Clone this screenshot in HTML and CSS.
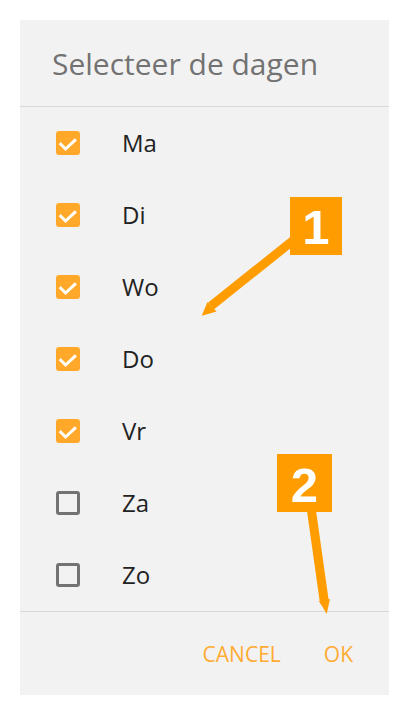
FILE: index.html
```html
<!DOCTYPE html>
<html>
<head>
<meta charset="utf-8">
<link rel="stylesheet" href="styles.css">
</head>
<body>
<div class="dialog">
  <div class="header"><h1 class="title">Selecteer de dagen</h1></div>
  <ul class="list">
    <li class="row"><span class="box checked"><svg viewBox="0 0 24 24"><path d="M4.8 13.2 L9.6 18 L18.8 9.4"/></svg></span><span class="label">Ma</span></li>
    <li class="row"><span class="box checked"><svg viewBox="0 0 24 24"><path d="M4.8 13.2 L9.6 18 L18.8 9.4"/></svg></span><span class="label">Di</span></li>
    <li class="row"><span class="box checked"><svg viewBox="0 0 24 24"><path d="M4.8 13.2 L9.6 18 L18.8 9.4"/></svg></span><span class="label">Wo</span></li>
    <li class="row"><span class="box checked"><svg viewBox="0 0 24 24"><path d="M4.8 13.2 L9.6 18 L18.8 9.4"/></svg></span><span class="label">Do</span></li>
    <li class="row"><span class="box checked"><svg viewBox="0 0 24 24"><path d="M4.8 13.2 L9.6 18 L18.8 9.4"/></svg></span><span class="label">Vr</span></li>
    <li class="row"><span class="box"></span><span class="label">Za</span></li>
    <li class="row"><span class="box"></span><span class="label">Zo</span></li>
  </ul>
  <div class="footer">
    <span class="btn">CANCEL</span>
    <span class="btn">OK</span>
  </div>
</div>
<svg class="annot" width="409" height="715" viewBox="0 0 409 715">
  <line x1="300" y1="235" x2="211" y2="306" class="arrow-line"/>
  <polygon points="207.5,302 201.7,315.7 216.5,311.5" class="arrow-head"/>
  <rect x="290" y="197" width="52" height="58" class="tag"/>
  <text x="316" y="244" class="tag-num">1</text>
  <line x1="310" y1="500" x2="324.5" y2="603" class="arrow-line"/>
  <polygon points="319,601 326.7,614 330,599" class="arrow-head"/>
  <rect x="277" y="454" width="55" height="58" class="tag"/>
  <text x="304.5" y="502" class="tag-num">2</text>
</svg>
</body>
</html>
```

FILE: styles.css
```css
html, body {
  margin: 0;
  padding: 0;
  background: #ffffff;
}
body {
  padding: 20px;
  font-family: "Open Sans", "Noto Sans", sans-serif;
}
.dialog {
  width: 369px;
  height: 675px;
  background: #f2f2f2;
  display: flex;
  flex-direction: column;
}
.header {
  padding: 24px 0 22px 32px;
  border-bottom: 1px solid #d8d8d8;
}
.title {
  margin: 0;
  font-size: 30px;
  line-height: 40px;
  font-weight: 400;
  color: #727272;
}
.list {
  list-style: none;
  margin: 0;
  padding: 0;
  border-bottom: 1px solid #d8d8d8;
}
.row {
  height: 72px;
  display: flex;
  align-items: center;
  padding-left: 36px;
}
.box {
  width: 24px;
  height: 24px;
  box-sizing: border-box;
  border: 3px solid #737373;
  border-radius: 3px;
  margin-right: 42px;
  flex: none;
  display: block;
}
.box.checked {
  border: none;
  background: #ffa82a;
}
.box svg {
  width: 24px;
  height: 24px;
  display: block;
}
.box svg path {
  fill: none;
  stroke: #ffffff;
  stroke-width: 3;
  stroke-linecap: square;
}
.label {
  font-size: 24px;
  line-height: 24px;
  color: #222222;
}
.footer {
  display: flex;
  justify-content: flex-end;
  gap: 43px;
  padding: 30px 36px 0 0;
}
.btn {
  font-size: 21px;
  line-height: 24px;
  color: #ffab33;
}
.annot {
  position: absolute;
  left: 0;
  top: 0;
}
.arrow-line {
  stroke: #ff9c00;
  stroke-width: 9;
}
.arrow-head {
  fill: #ff9c00;
}
.tag {
  fill: #ff9c00;
}
.tag-num {
  font-family: "Liberation Sans", Arial, sans-serif;
  font-weight: 700;
  font-size: 49px;
  fill: #ffffff;
  text-anchor: middle;
}
```
